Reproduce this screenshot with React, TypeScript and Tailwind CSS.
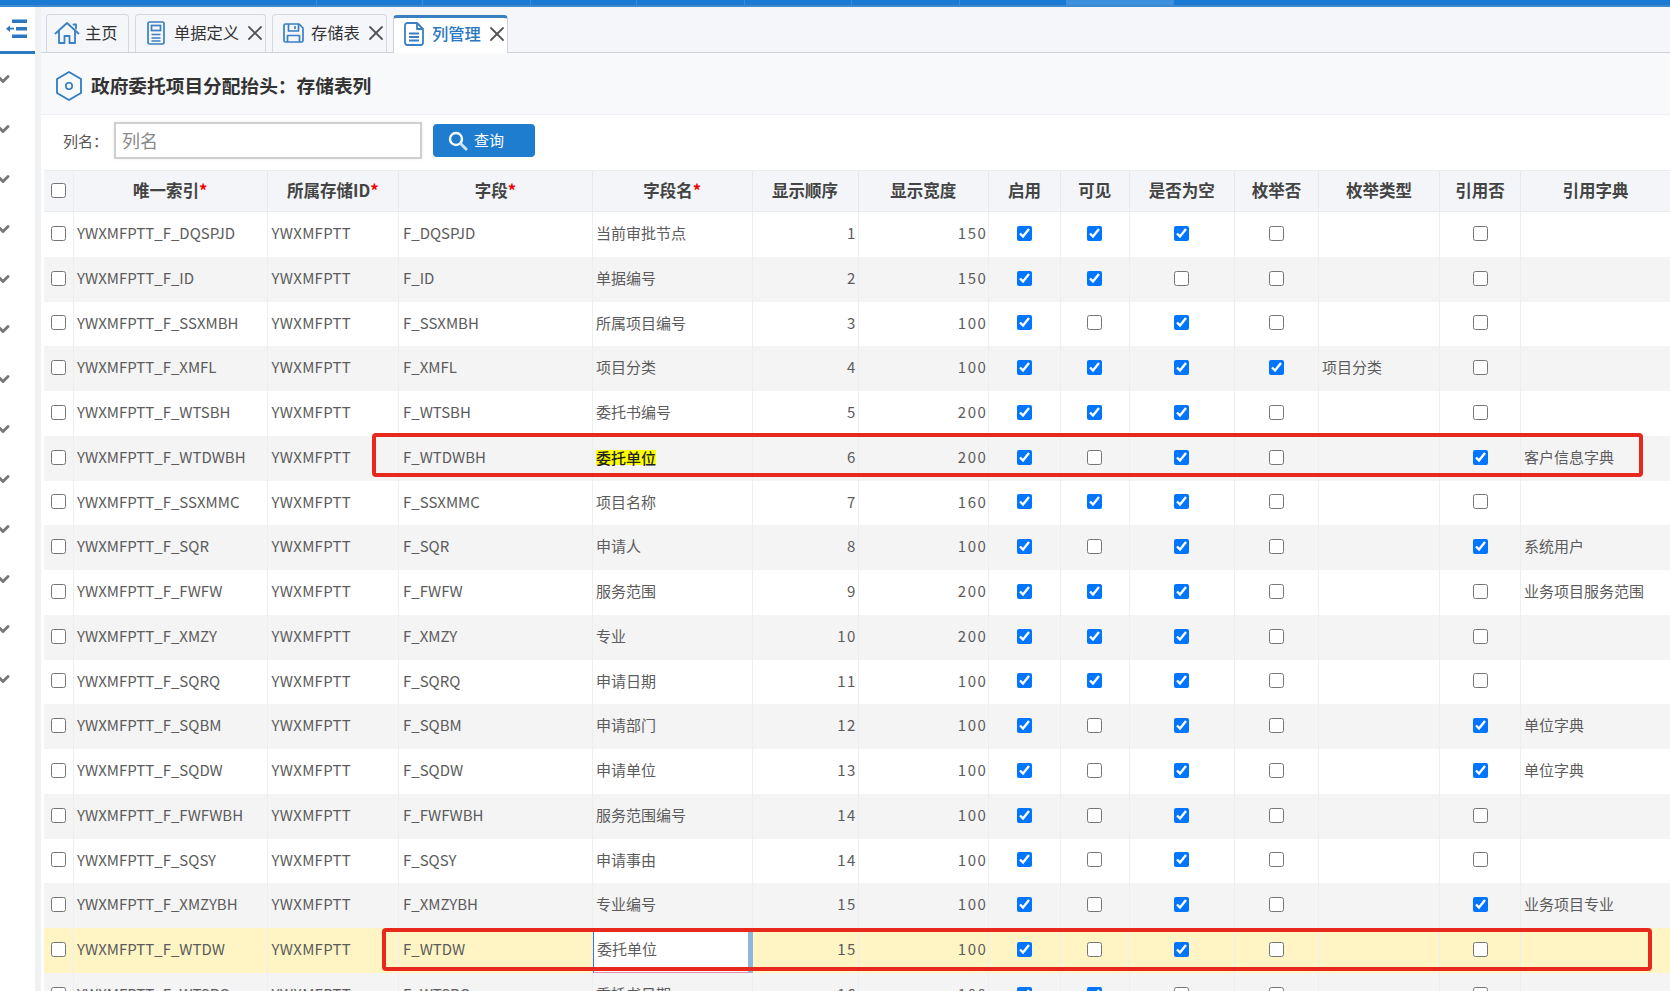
import { ChevronDown, X } from 'lucide-react'

const gridCols =
  'grid grid-cols-[30px_193.5px_131.5px_194px_159.5px_106px_130.5px_72px_68.5px_105.5px_84px_121px_81px_149px]'

const topSeparators = [316, 422, 530, 636, 744, 851, 959, 1066, 1173]

interface Row {
  code: string
  name: string
  order: number
  width: number
  enabled: boolean
  visible: boolean
  nullable: boolean
  isEnum: boolean
  enumType?: string
  isRef: boolean
  dict?: string
}

const rows: Row[] = [
  { code: 'DQSPJD', name: '当前审批节点', order: 1, width: 150, enabled: true, visible: true, nullable: true, isEnum: false, isRef: false },
  { code: 'ID', name: '单据编号', order: 2, width: 150, enabled: true, visible: true, nullable: false, isEnum: false, isRef: false },
  { code: 'SSXMBH', name: '所属项目编号', order: 3, width: 100, enabled: true, visible: false, nullable: true, isEnum: false, isRef: false },
  { code: 'XMFL', name: '项目分类', order: 4, width: 100, enabled: true, visible: true, nullable: true, isEnum: true, enumType: '项目分类', isRef: false },
  { code: 'WTSBH', name: '委托书编号', order: 5, width: 200, enabled: true, visible: true, nullable: true, isEnum: false, isRef: false },
  { code: 'WTDWBH', name: '委托单位', order: 6, width: 200, enabled: true, visible: false, nullable: true, isEnum: false, isRef: true, dict: '客户信息字典' },
  { code: 'SSXMMC', name: '项目名称', order: 7, width: 160, enabled: true, visible: true, nullable: true, isEnum: false, isRef: false },
  { code: 'SQR', name: '申请人', order: 8, width: 100, enabled: true, visible: false, nullable: true, isEnum: false, isRef: true, dict: '系统用户' },
  { code: 'FWFW', name: '服务范围', order: 9, width: 200, enabled: true, visible: true, nullable: true, isEnum: false, isRef: false, dict: '业务项目服务范围' },
  { code: 'XMZY', name: '专业', order: 10, width: 200, enabled: true, visible: true, nullable: true, isEnum: false, isRef: false },
  { code: 'SQRQ', name: '申请日期', order: 11, width: 100, enabled: true, visible: true, nullable: true, isEnum: false, isRef: false },
  { code: 'SQBM', name: '申请部门', order: 12, width: 100, enabled: true, visible: false, nullable: true, isEnum: false, isRef: true, dict: '单位字典' },
  { code: 'SQDW', name: '申请单位', order: 13, width: 100, enabled: true, visible: false, nullable: true, isEnum: false, isRef: true, dict: '单位字典' },
  { code: 'FWFWBH', name: '服务范围编号', order: 14, width: 100, enabled: true, visible: false, nullable: true, isEnum: false, isRef: false },
  { code: 'SQSY', name: '申请事由', order: 14, width: 100, enabled: true, visible: false, nullable: true, isEnum: false, isRef: false },
  { code: 'XMZYBH', name: '专业编号', order: 15, width: 100, enabled: true, visible: false, nullable: true, isEnum: false, isRef: true, dict: '业务项目专业' },
  { code: 'WTDW', name: '委托单位', order: 15, width: 100, enabled: true, visible: false, nullable: true, isEnum: false, isRef: false },
  { code: 'WTSRQ', name: '委托书日期', order: 16, width: 100, enabled: true, visible: true, nullable: false, isEnum: false, isRef: false },
]

function HomeIcon() {
  return (
    <svg width="26" height="24" viewBox="0 0 26 24" fill="none" stroke="#3a7fc1" strokeWidth="1.8" strokeLinejoin="round" strokeLinecap="round">
      <path d="M1.5 12.5 13 2l11.5 10.5" />
      <path d="M5 10.5V22h5.5v-7h5v7H21V10.5" />
      <path d="M19.5 3.5h2.5v4" />
    </svg>
  )
}

function DocFormIcon() {
  return (
    <svg width="18" height="24" viewBox="0 0 18 24" fill="none" stroke="#3a7fc1" strokeWidth="1.7">
      <rect x="1" y="1" width="16" height="22" rx="1.5" />
      <rect x="4.5" y="4.5" width="9" height="5" />
      <path d="M4.5 13.5h9M4.5 17h9M4.5 20h9" />
    </svg>
  )
}

function SaveIcon() {
  return (
    <svg width="21" height="20" viewBox="0 0 21 20" fill="none" stroke="#3a7fc1" strokeWidth="1.7" strokeLinejoin="round">
      <path d="M2.5 1H16l4 4v12.5a1.5 1.5 0 0 1-1.5 1.5h-16A1.5 1.5 0 0 1 1 17.5v-15A1.5 1.5 0 0 1 2.5 1Z" />
      <path d="M5.5 1v7h10V1M12 3v3" />
      <path d="M4.5 19v-6.5h12V19" />
    </svg>
  )
}

function FileIcon() {
  return (
    <svg width="20" height="24" viewBox="0 0 20 24" fill="none" stroke="#3a7fc1" strokeWidth="1.8" strokeLinejoin="round">
      <path d="M3.5 1H13l6 6v13.5a2.5 2.5 0 0 1-2.5 2.5h-13A2.5 2.5 0 0 1 1 20.5v-17A2.5 2.5 0 0 1 3.5 1Z" />
      <path d="M13 1v6h6M5 11.5h10M5 15h10M5 18.5h10" />
    </svg>
  )
}

function Tab({ icon, label, closable = true, active = false, w }: { icon: React.ReactNode; label: string; closable?: boolean; active?: boolean; w: string }) {
  return (
    <div
      className={`${w} h-[38px] flex items-center pl-[7px] rounded-t-[4px] border-x border-t ${
        active
          ? 'bg-white border-x-[#cfd4da] border-t-[3px] border-t-[#3a80c0] relative top-[1px] pb-[4px] text-[#2a78c2] font-medium'
          : 'bg-[#f4f6fa] border-[#d5d9de] pb-[2px] text-[#333]'
      }`}
    >
      <span className="w-[26px] flex justify-center shrink-0">{icon}</span>
      <span className="ml-[5px] text-[16.3px] leading-none flex-1 whitespace-nowrap">{label}</span>
      {closable && <X className="w-[24px] h-[24px] -mr-[2px] text-[#555] shrink-0" strokeWidth={1.8} />}
    </div>
  )
}

function Check({ on }: { on: boolean }) {
  return <input type="checkbox" defaultChecked={on} className="w-[15px] h-[15px] m-0" />
}

function Cell({ children, align = 'left', border = true }: { children?: React.ReactNode; align?: 'left' | 'right' | 'center'; border?: boolean }) {
  return (
    <div
      className={`h-full flex items-center pb-[2px] overflow-hidden whitespace-nowrap ${border ? 'border-r border-[#eceef0]' : ''} ${
        align === 'right' ? 'justify-end pr-[0.5px] tracking-[1.6px]' : align === 'center' ? 'justify-center' : 'pl-[3px]'
      }`}
    >
      {children}
    </div>
  )
}

function Head({ label, req = false, border = true }: { label: string; req?: boolean; border?: boolean }) {
  return (
    <div className={`h-full flex items-center justify-center pb-[2px] whitespace-nowrap ${border ? 'border-r border-[#e6e8ec]' : ''}`}>
      {label}
      {req && <span className="text-[#f00000]">*</span>}
    </div>
  )
}

export default function App() {
  return (
    <div className="w-[1670px] h-[991px] overflow-hidden flex flex-col bg-white font-['Noto_Sans_CJK_SC','Liberation_Sans',sans-serif] text-[15px] text-[#5c5c5c]">
      {/* top bar */}
      <div className="h-[7px] shrink-0 bg-[#1b7bd4] border-b-2 border-[#3c8bcf] relative">
        {topSeparators.map((x) => (
          <div key={x} className="absolute top-0 h-[5px] w-px bg-[#3a8bd8]" style={{ left: x }} />
        ))}
        <div className="absolute top-0 h-[5px] left-[1066px] w-[107px] bg-[#3d90de]" />
      </div>

      <div className="flex-1 flex min-h-0">
        {/* side menu */}
        <div className="w-[35px] shrink-0 bg-white flex flex-col">
          <div className="h-[47px] shrink-0 border-b-[3px] border-[#2a7ac4] flex items-start justify-start pl-[6px] pt-[12px]">
            <svg width="21" height="20" viewBox="0 0 21 20" fill="#2a78c2">
              <rect x="6" y="0.5" width="15" height="3.5" />
              <rect x="10" y="8" width="11" height="3.5" />
              <rect x="6" y="15.5" width="15" height="3.5" />
              <path d="M0 9.7 4 6.5v2.3h4v1.8H4v2.3Z" />
            </svg>
          </div>
          <div className="flex flex-col mt-[15px] gap-[30px]">
            {Array.from({ length: 13 }).map((_, i) => (
              <ChevronDown key={i} className="w-[20px] h-[20px] -ml-[7px] text-[#777]" strokeWidth={3.5} />
            ))}
          </div>
        </div>

        <div className="w-[6px] shrink-0 bg-[#f0f1f3]" />

        {/* main */}
        <div className="flex-1 min-w-0 flex flex-col">
          <div className="h-[46px] shrink-0 bg-[#f4f6fa] border-b border-[#cfd3d8] flex items-end pl-[5px] gap-[6px]">
            <Tab w="w-[83px]" icon={<HomeIcon />} label="主页" closable={false} />
            <Tab w="w-[131px]" icon={<DocFormIcon />} label="单据定义" />
            <Tab w="w-[115px]" icon={<SaveIcon />} label="存储表" />
            <Tab w="w-[115px]" icon={<FileIcon />} label="列管理" active />
          </div>

          <div className="h-[62px] shrink-0 bg-[#f8f9fb] border-b border-[#eeeff2] flex items-center pl-[15px] pt-[4px]">
            <svg width="26" height="30" viewBox="0 0 26 30" fill="none" stroke="#2f7cc4" strokeWidth="1.8">
              <path d="M13 1 25 8v14l-12 7L1 22V8Z" strokeLinejoin="round" />
              <circle cx="13" cy="15" r="3.2" strokeWidth="1.6" />
            </svg>
            <h1 className="ml-[9px] text-[18.7px] leading-none font-bold text-[#333]">政府委托项目分配抬头：存储表列</h1>
          </div>

          <div className="h-[55px] shrink-0 bg-white flex items-center pl-[22px] pb-[4px]">
            <span className="w-[51px] pt-[2px] text-[15px] text-[#555]">列名：</span>
            <input
              placeholder="列名"
              className="w-[308px] h-[37px] border-2 border-[#cfcfcf] pl-[6px] pb-[2px] text-[18px] shadow-[0_0_3px_rgba(0,0,0,0.08)] outline-none placeholder:text-[#8a8a8a]"
            />
            <button className="ml-[11px] w-[102px] h-[33px] rounded-[4px] bg-[#1f7dd0] text-white text-[15px] flex items-center justify-start pl-[15px] gap-[6px]">
              <svg width="20" height="20" viewBox="0 0 20 20" fill="none">
                <circle cx="8" cy="8" r="6" stroke="#fff" strokeWidth="2.4" />
                <path d="M13 13l5 5" stroke="#cfe3f5" strokeWidth="3" strokeLinecap="round" />
              </svg>
              查询
            </button>
          </div>

          {/* table */}
          <div className="flex-1 min-h-0 pl-[3px]">
            <div className={`${gridCols} h-[42px] bg-[#f3f5f9] border-y border-[#e9ebef] text-[16.5px] font-bold text-[#444]`}>
              <Cell align="center">
                <input type="checkbox" className="w-[15px] h-[15px] m-0" />
              </Cell>
              <Head label="唯一索引" req />
              <Head label="所属存储ID" req />
              <Head label="字段" req />
              <Head label="字段名" req />
              <Head label="显示顺序" />
              <Head label="显示宽度" />
              <Head label="启用" />
              <Head label="可见" />
              <Head label="是否为空" />
              <Head label="枚举否" />
              <Head label="枚举类型" />
              <Head label="引用否" />
              <Head label="引用字典" border={false} />
            </div>

            {rows.map((r, i) => {
              const marked = i === 5
              const editing = i === 16
              return (
                <div
                  key={r.code}
                  className={`${gridCols} h-[44.75px] relative ${editing ? 'bg-[#fff5c4]' : i % 2 === 1 ? 'bg-[#f4f4f5]' : 'bg-white'}`}
                >
                  <Cell align="center">
                    <input type="checkbox" className="w-[15px] h-[15px] m-0" />
                  </Cell>
                  <Cell>YWXMFPTT_F_{r.code}</Cell>
                  <Cell>
                    <span className="pl-[1px] tracking-[0.3px]">YWXMFPTT</span>
                  </Cell>
                  <Cell>
                    <span className="pl-[1px]">F_{r.code}</span>
                  </Cell>
                  {editing ? (
                    <div className="h-full flex items-center bg-white border-l border-[#3a7cc0] border-r-[5px] border-r-[#8bb6e0] border-b border-b-[#e58fb0] pl-[3px] pb-[1px] whitespace-nowrap">
                      {r.name}
                    </div>
                  ) : (
                    <Cell>
                      {marked ? <span className="bg-[#ffff00] text-[#222] font-medium leading-[15px]">{r.name}</span> : r.name}
                    </Cell>
                  )}
                  <Cell align="right">{r.order}</Cell>
                  <Cell align="right">{r.width}</Cell>
                  <Cell align="center"><Check on={r.enabled} /></Cell>
                  <Cell align="center"><Check on={r.visible} /></Cell>
                  <Cell align="center"><Check on={r.nullable} /></Cell>
                  <Cell align="center"><Check on={r.isEnum} /></Cell>
                  <Cell>{r.enumType}</Cell>
                  <Cell align="center"><Check on={r.isRef} /></Cell>
                  <Cell border={false}>{r.dict}</Cell>

                  {marked && (
                    <div className="absolute left-[328px] top-[-3px] w-[1271px] h-[44px] border-4 border-[#e8281c] rounded-[4px] pointer-events-none" />
                  )}
                  {editing && (
                    <div className="absolute left-[338px] top-0 w-[1270px] h-[43px] border-4 border-[#e8281c] rounded-[4px] pointer-events-none" />
                  )}
                </div>
              )
            })}
          </div>
        </div>
      </div>
    </div>
  )
}
